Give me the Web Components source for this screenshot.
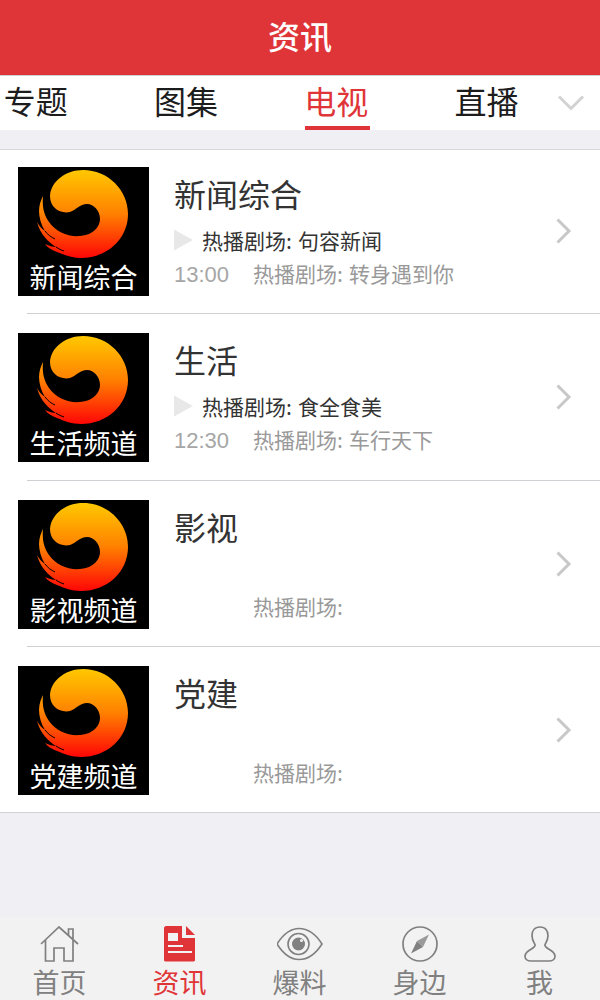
<!DOCTYPE html>
<html lang="zh"><head><meta charset="utf-8"><style>
html,body{margin:0;padding:0;background:#efeff4}
body{width:600px;height:1000px;overflow:hidden;display:flex;flex-direction:column;font-family:"Noto Sans CJK SC","Liberation Sans",sans-serif}
</style></head><body>
<app-header>资讯</app-header>
<channel-tabs></channel-tabs>
<channel-list>
<channel-row name="新闻综合" logo="新闻综合" now="句容新闻" time="13:00" next="转身遇到你"></channel-row>
<channel-row name="生活" logo="生活频道" now="食全食美" time="12:30" next="车行天下"></channel-row>
<channel-row name="影视" logo="影视频道" next=""></channel-row>
<channel-row name="党建" logo="党建频道" next="" last></channel-row>
</channel-list>
<bottom-nav></bottom-nav>
<script>
const CJK='"Noto Sans CJK SC","Liberation Sans",sans-serif';
function def(name,css,html){
  customElements.define(name,class extends HTMLElement{
    connectedCallback(){
      if(this.shadowRoot)return;
      const s=this.attachShadow({mode:'open'});
      s.innerHTML='<style>'+css+'</style>'+(typeof html==='function'?html(this):html);
    }
  });
}
def('app-header',`:host{display:flex;flex:none;height:75px;background:#e03538;color:#fff;align-items:center;justify-content:center;font:500 32px/1 ${CJK};box-sizing:border-box}
span{display:block;margin-top:-6px}`,'<span><slot></slot></span>');

def('channel-tabs',`:host{display:flex;flex:none;height:55px;background:#fff;border-top:1px solid #d0d0d0;box-sizing:border-box;overflow:hidden;position:relative;font:400 32px/1 ${CJK};color:#1c1c1c}
.track{display:flex;margin-left:-39.5px}
.t{width:150.3px;flex:none;display:flex;justify-content:center;height:54px;box-sizing:border-box;padding-top:8px;position:relative}
.t.on{color:#e03538}
.t.on::after{content:"";position:absolute;left:43.5px;width:65px;bottom:0;height:4px;background:#e03538}
svg{position:absolute;left:557px;top:18px}`,
`<div class="track"><div class="t">专题</div><div class="t">图集</div><div class="t on">电视</div><div class="t">直播</div></div>
<svg width="28" height="18" viewBox="0 0 28 18"><path d="M2 2.500 14 14.500 26 2.500" fill="none" stroke="#d2d2d2" stroke-width="3"/></svg>`);

def('channel-list',`:host{display:block;flex:none;margin-top:19px;background:#fff;border-top:1px solid #d8d8dc;border-bottom:1px solid #d2d2d6}`,'<slot></slot>');

def('station-logo',`:host{display:flex;flex-direction:column;align-items:center;width:131px;height:129px;background:#000;flex:none;position:relative;overflow:hidden}
svg{display:block;flex:none}
span{color:#fff;font:400 27px/1 ${CJK};white-space:nowrap;margin-top:1px}`,
h=>`<svg width="131" height="95" viewBox="0 0 131 95"><defs><linearGradient id="g" x1="0" y1="0" x2="0" y2="1"><stop offset="0" stop-color="#ffc800"/><stop offset=".5" stop-color="#ff8000"/><stop offset="1" stop-color="#ff0606"/></linearGradient></defs>
<path fill="url(#g)" d="M65 3C90 3 110 23 110 47C110 72 89 91 63 91C54 91 46 88 39 85C34 83 30 81 27 77C31 79 35 80 38 80C31 76 22 67 19 55C21 59 24 62 27 64C23 58 21 50 21 44C21 38 23 33 25 29C24 40 26 48 31 55C38 65 50 70 62 69C76 68 82 59 82 52C82 44 76 37 69 37C62 37 58 43 52 45C42 47 32 41 32 29C33 14 48 3 65 3Z"/>
<path d="M27 64C30 68 33 70 37 72M38 80C41 82 43 83 46 84" fill="none" stroke="#000" stroke-width="1"/></svg><span>${h.getAttribute('text')}</span>`);

def('channel-row',`:host{display:block;height:166.4px;position:relative;box-sizing:border-box;color:#333}
:host([last]){height:162.8px}
.row{display:flex;padding:17px 0 0 18px;box-sizing:border-box;height:100%}
.info{margin-left:25px;display:flex;flex-direction:column;position:relative;flex:1}
h3{margin:0;font:400 32px/1 ${CJK};color:#333;height:32px;margin-top:10px}
.now{display:flex;align-items:center;height:24px;margin-top:19px;font:400 21px/24px ${CJK};word-spacing:1.5px;color:#333}
.now svg{margin-right:9px;flex:none}
.sub{display:flex;height:24px;margin-top:9px;font:400 21px/24px ${CJK};word-spacing:1.5px;color:#999}
.time{width:79px;flex:none;font-family:"Liberation Sans",sans-serif;font-size:22px;color:#a6a6a6;padding-top:2px}
.chev{position:absolute;left:555px;top:67px}
.sep{position:absolute;left:27px;right:0;bottom:2px;height:1px;background:#cfcfd4}`,
h=>{const a=k=>h.getAttribute(k)||'';return `<div class="row"><station-logo text="${a('logo')}"></station-logo>
<div class="info"><h3>${a('name')}</h3>
<div class="now">${a('now')?`<svg width="19" height="24" viewBox="0 0 19 24"><path d="M0 1.500 19 12 0 22.500Z" fill="#e8e8e8"/></svg><span>热播剧场: ${a('now')}</span>`:''}</div>
<div class="sub"><span class="time">${a('time')}</span><span>热播剧场: ${a('next')}</span></div></div></div>
<svg class="chev" width="18" height="28" viewBox="0 0 18 28"><path d="M2.500 2.500 14 14 2.500 25.500" fill="none" stroke="#c8c8c8" stroke-width="3"/></svg>
${h.hasAttribute('last')?'':'<div class="sep"></div>'}`});

const ICONS={
home:`<svg width="40" height="36" viewBox="0 0 40 36" fill="none" stroke="#808080" stroke-width="1.700"><path d="M1 18 19 1 38 18M33 13.500V3H28.500V9M5.500 14V35H14V22H24V35H33V14"/></svg>`,
news:`<svg width="32" height="36" viewBox="0 0 32 36"><path fill="#e03538" d="M2 0H18V12H31V34C31 35 30 35.500 29 35.500H2C1 35.500 0 35 0 34V2C0 1 1 0 2 0Z"/><path fill="#e03538" d="M22 0 31 9H22Z"/><path fill="#f2f2f2" d="M4 7H14V15H4ZM4 19H19V21H4ZM4 25H28V27H4Z"/></svg>`,
eye:`<svg width="46" height="36" viewBox="0 0 46 36" fill="none" stroke="#808080"><path stroke-width="1.600" d="M0 18C7 7 14 2.500 22 2.500C30 2.500 38 7 45 18C38 29 30 33.500 22 33.500C14 33.500 7 29 0 18Z"/><circle cx="21.500" cy="18" r="10.500" stroke-width="1.600"/><circle cx="21.500" cy="18" r="6.500" fill="#808080" stroke="none"/><circle cx="24.500" cy="14.500" r="1.500" fill="#f2f2f2" stroke="none"/></svg>`,
compass:`<svg width="36" height="36" viewBox="0 0 36 36"><circle cx="18" cy="18" r="17" fill="none" stroke="#808080" stroke-width="1.700"/><path d="M27 8.500 21 21 15 15Z" fill="#9a9a9a"/><path d="M9 27.500 15 15 21 21Z" fill="#808080"/></svg>`,
me:`<svg width="32" height="36" viewBox="0 0 32 36" fill="none" stroke="#808080" stroke-width="1.700"><path d="M16 1C10.500 1 8 5 8 9.500C8 14 10 16.500 11 18.500C12 21 8 22.500 5 24.500C2 26.500 1 28.500 1 30.500C1 33.500 4 35 7 35H25C28 35 31 33.500 31 30.500C31 28.500 30 26.500 27 24.500C24 22.500 20 21 21 18.500C22 16.500 24 14 24 9.500C24 5 21.500 1 16 1Z"/></svg>`};
def('nav-item',`:host{display:flex;flex-direction:column;align-items:center;flex:1;color:#808080;font:400 27px/1 "Liberation Sans","Noto Sans CJK SC",sans-serif}
:host([on]){color:#e03538}
.i{height:36px;margin-top:9px;display:flex;align-items:center;justify-content:center}
svg{display:block}
span{margin:8.500px 1px 0 0;line-height:27px}`,
h=>`<div class="i">${ICONS[h.getAttribute('icon')]}</div><span>${h.getAttribute('label')}</span>`);
def('bottom-nav',`:host{display:flex;flex:none;height:83px;margin-top:auto;background:#f2f2f2;overflow:hidden;box-sizing:border-box}`,
`<nav-item icon="home" label="首页"></nav-item><nav-item icon="news" label="资讯" on></nav-item><nav-item icon="eye" label="爆料"></nav-item><nav-item icon="compass" label="身边"></nav-item><nav-item icon="me" label="我"></nav-item>`);
</script>
</body></html>
